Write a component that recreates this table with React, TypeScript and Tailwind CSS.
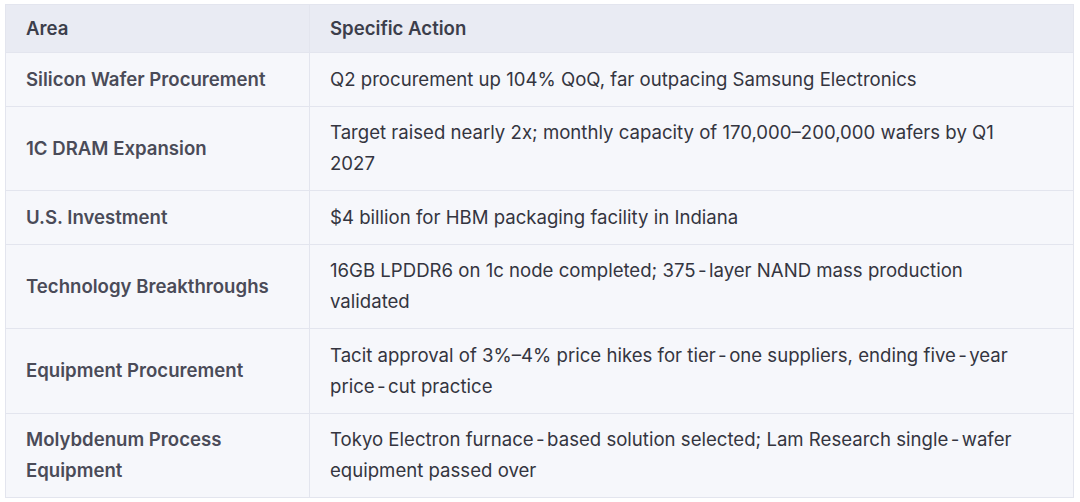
const nb = '\u202F\u2011\u202F'; // the source shows non-breaking hyphens with a little air on both sides

const rows = [
  { area: 'Silicon Wafer Procurement', action: 'Q2 procurement up 104% QoQ, far outpacing Samsung Electronics' },
  { area: '1C DRAM Expansion', action: 'Target raised nearly 2x; monthly capacity of 170,000–200,000 wafers by Q1 2027' },
  { area: 'U.S. Investment', action: '$4 billion for HBM packaging facility in Indiana' },
  { area: 'Technology Breakthroughs', action: `16GB LPDDR6 on 1c node completed; 375${nb}layer NAND mass production validated` },
  { area: 'Equipment Procurement', action: `Tacit approval of 3%–4% price hikes for tier${nb}one suppliers, ending five${nb}year price${nb}cut practice` },
  { area: 'Molybdenum Process Equipment', action: `Tokyo Electron furnace${nb}based solution selected; Lam Research single${nb}wafer equipment passed over` },
];

export default function App() {
  return (
    <div className="min-h-screen bg-white pl-[5px] pr-[6px] pt-[4px] font-['Inter',sans-serif]">
      <table className="w-full border-collapse border border-[#e3e5ee] text-[18.6px] leading-[31px]">
        <thead>
          <tr className="bg-[#e9ebf3]">
            <th className="w-[304px] border border-[#e3e5ee] px-5 py-[8px] text-left font-semibold text-[#3c3e4b]">Area</th>
            <th className="border border-[#e3e5ee] px-5 py-[8px] text-left font-semibold text-[#3c3e4b]">Specific Action</th>
          </tr>
        </thead>
        <tbody className="bg-[#f6f7fb]">
          {rows.map(r => (
            <tr key={r.area}>
              <td className="border border-[#e3e5ee] px-5 py-[10.75px] font-semibold text-[#4a4b58]">{r.area}</td>
              <td className="border border-[#e3e5ee] py-[10.75px] pl-5 pr-[40px] text-[#34353f]">{r.action}</td>
            </tr>
          ))}
        </tbody>
      </table>
    </div>
  );
}
